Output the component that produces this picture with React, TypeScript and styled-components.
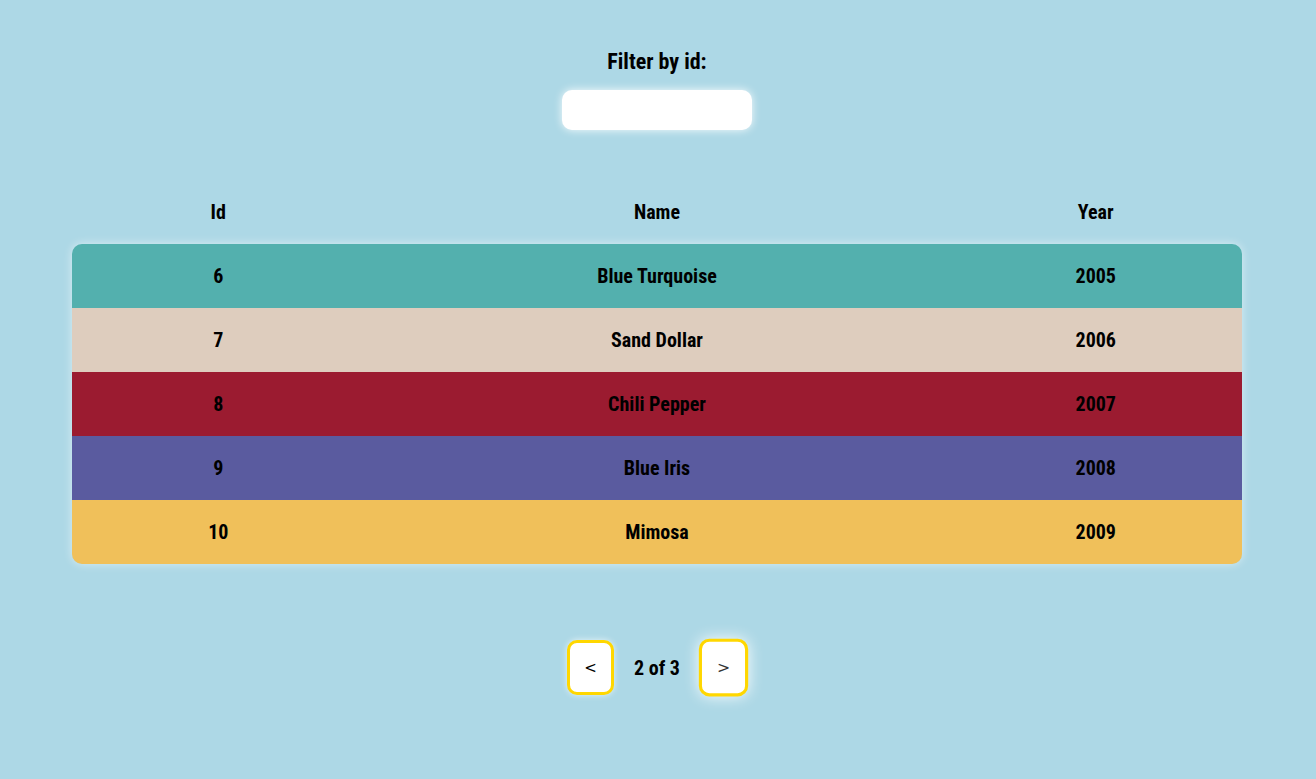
import styled, { createGlobalStyle } from "styled-components"

const GlobalStyle = createGlobalStyle`
  html, body {
    margin: 0;
    padding: 0;
    background: #add8e6;
  }
  body {
    font-family: "Roboto Condensed", "Open Sans", sans-serif;
  }
`

type Color = {
  id: number
  name: string
  year: number
  color: string
}

const colors: Color[] = [
  { id: 6, name: "Blue Turquoise", year: 2005, color: "#53b0ae" },
  { id: 7, name: "Sand Dollar", year: 2006, color: "#decdbe" },
  { id: 8, name: "Chili Pepper", year: 2007, color: "#9b1b30" },
  { id: 9, name: "Blue Iris", year: 2008, color: "#5a5b9f" },
  { id: 10, name: "Mimosa", year: 2009, color: "#f0c05a" },
]

const Page = styled.main`
  display: flex;
  flex-direction: column;
  align-items: center;
  min-height: 779px;
  padding: 50px 74px 0 72px;
  box-sizing: border-box;
  color: #000;
`

const Filter = styled.div`
  display: flex;
  flex-direction: column;
  align-items: center;
  gap: 16px;
`

const Label = styled.label`
  font-weight: 700;
  font-size: 22px;
  line-height: 24px;
`

const Input = styled.input`
  width: 190px;
  height: 40px;
  box-sizing: border-box;
  border: none;
  border-radius: 10px;
  background: #ffffff;
  box-shadow: 0 0 8px rgba(255, 255, 255, 0.9);
  outline: none;
  padding: 0 12px;
  font-size: 16px;
`

const Table = styled.div`
  width: 100%;
  margin-top: 50px;
`

const Row = styled.div<{ $bg?: string }>`
  display: grid;
  grid-template-columns: 1fr 2fr 1fr;
  height: 64px;
  align-items: center;
  background: ${({ $bg }) => $bg ?? "transparent"};
`

const Cell = styled.div`
  text-align: center;
  font-weight: 700;
  font-size: 20px;
`

const Body = styled.div`
  border-radius: 10px;
  overflow: hidden;
  box-shadow: 0 0 10px rgba(255, 255, 255, 0.55);
`

const Pager = styled.nav`
  display: flex;
  align-items: center;
  gap: 20px;
  margin-top: 76px;
`

const PageButton = styled.button<{ $hover?: boolean }>`
  width: 47px;
  height: 55px;
  box-sizing: border-box;
  border: 3px solid #ffd700;
  border-radius: 10px;
  background: #ffffff;
  color: ${({ $hover }) => ($hover ? "#333" : "#000")};
  font-family: "DejaVu Sans", Arial, sans-serif;
  font-size: 15px;
  cursor: pointer;
  transform: ${({ $hover }) => ($hover ? "scale(1.05)" : "none")};
  box-shadow: ${({ $hover }) =>
    $hover ? "0 0 14px rgba(255, 255, 255, 0.95)" : "0 0 6px rgba(255, 255, 255, 0.7)"};
`

const PageInfo = styled.span`
  font-weight: 700;
  font-size: 20px;
`

export default function App() {
  return (
    <>
      <GlobalStyle />
      <Page>
        <Filter>
          <Label htmlFor="filter">Filter by id:</Label>
          <Input id="filter" type="text" />
        </Filter>

        <Table>
          <Row>
            <Cell>Id</Cell>
            <Cell>Name</Cell>
            <Cell>Year</Cell>
          </Row>
          <Body>
            {colors.map((c) => (
              <Row key={c.id} $bg={c.color}>
                <Cell>{c.id}</Cell>
                <Cell>{c.name}</Cell>
                <Cell>{c.year}</Cell>
              </Row>
            ))}
          </Body>
        </Table>

        <Pager>
          <PageButton type="button">&lt;</PageButton>
          <PageInfo>2 of 3</PageInfo>
          <PageButton type="button" $hover>
            &gt;
          </PageButton>
        </Pager>
      </Page>
    </>
  )
}
